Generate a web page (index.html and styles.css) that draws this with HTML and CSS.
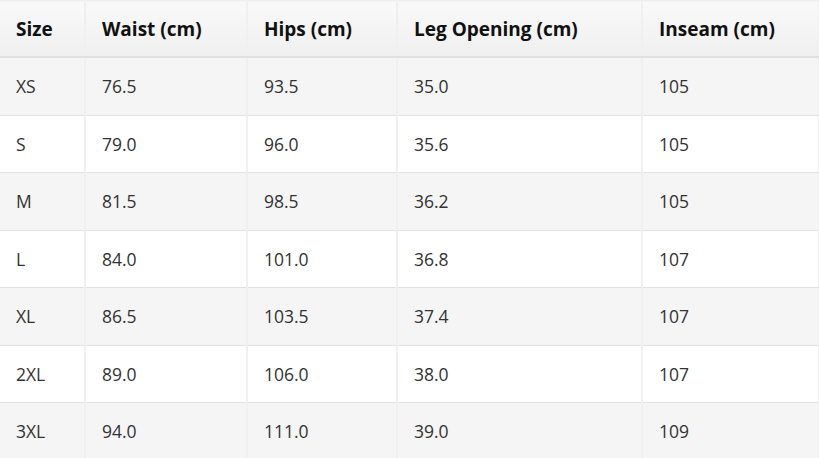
FILE: index.html
```html
<!DOCTYPE html>
<html>
<head>
<meta charset="utf-8">
<link rel="stylesheet" href="styles.css">
</head>
<body>
<table class="size-table">
  <colgroup>
    <col class="c1"><col class="c2"><col class="c3"><col class="c4"><col class="c5">
  </colgroup>
  <thead>
    <tr><th>Size</th><th>Waist (cm)</th><th>Hips (cm)</th><th>Leg Opening (cm)</th><th>Inseam (cm)</th></tr>
  </thead>
  <tbody>
    <tr><td>XS</td><td>76.5</td><td>93.5</td><td>35.0</td><td>105</td></tr>
    <tr><td>S</td><td>79.0</td><td>96.0</td><td>35.6</td><td>105</td></tr>
    <tr><td>M</td><td>81.5</td><td>98.5</td><td>36.2</td><td>105</td></tr>
    <tr><td>L</td><td>84.0</td><td>101.0</td><td>36.8</td><td>107</td></tr>
    <tr><td>XL</td><td>86.5</td><td>103.5</td><td>37.4</td><td>107</td></tr>
    <tr><td>2XL</td><td>89.0</td><td>106.0</td><td>38.0</td><td>107</td></tr>
    <tr><td>3XL</td><td>94.0</td><td>111.0</td><td>39.0</td><td>109</td></tr>
  </tbody>
</table>
</body>
</html>
```
FILE: styles.css
```css
html, body {
  margin: 0;
  padding: 0;
  background: #ffffff;
}
body {
  font-family: "Open Sans", "Noto Sans", sans-serif;
  font-size: 17.5px;
  color: #333333;
}
.size-table {
  width: 818px;
  border-collapse: collapse;
  table-layout: fixed;
  border-top: 1px solid #eeeeee;
  border-right: 1px solid #f0f0f0;
}
.c1 { width: 85px; }
.c2 { width: 162px; }
.c3 { width: 150px; }
.c4 { width: 245px; }
.c5 { width: 176px; }
.size-table th,
.size-table td {
  padding: 16px 16px;
  line-height: 24.5px;
  text-align: left;
  border-left: 2px solid #f0f0f0;
  border-bottom: 1px solid #e2e2e2;
  white-space: nowrap;
}
.size-table th:first-child,
.size-table td:first-child {
  border-left: none;
}
.size-table th {
  font-size: 19px;
  font-weight: 700;
  color: #111111;
  background: linear-gradient(to bottom, #f9f9f9, #efefef);
  border-bottom: 2px solid #e0e0e0;
  padding-top: 15.5px;
  padding-bottom: 15px;
}
.size-table td {
  font-weight: 400;
}
.size-table tbody tr:nth-child(odd) td {
  background: #f5f5f5;
}
.size-table tbody tr:nth-child(even) td {
  background: #ffffff;
}
```
